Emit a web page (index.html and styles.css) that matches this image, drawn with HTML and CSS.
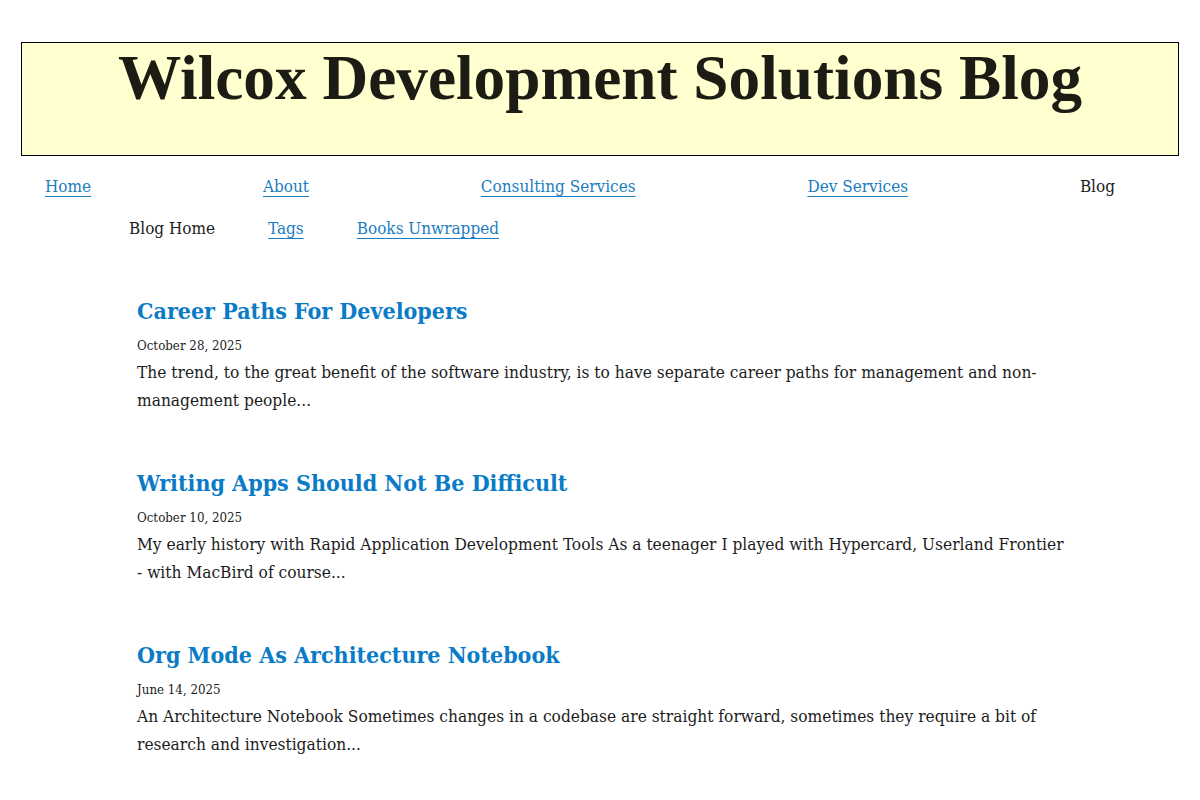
FILE: index.html
```
<!DOCTYPE html>
<html lang="en">
<head>
<meta charset="utf-8">
<title>Wilcox Development Solutions Blog</title>
<link rel="stylesheet" href="styles.css">
</head>
<body>
<header class="masthead">
  <h1 class="site-title">Wilcox Development Solutions Blog</h1>
</header>
<nav class="main-nav">
  <a href="#" class="nav-link">Home</a>
  <a href="#" class="nav-link">About</a>
  <a href="#" class="nav-link">Consulting Services</a>
  <a href="#" class="nav-link">Dev Services</a>
  <span class="nav-current">Blog</span>
</nav>
<nav class="sub-nav">
  <span class="nav-current">Blog Home</span>
  <a href="#" class="nav-link">Tags</a>
  <a href="#" class="nav-link">Books Unwrapped</a>
</nav>
<main class="posts">
  <article class="post">
    <h2 class="post-title"><a href="#">Career Paths For Developers</a></h2>
    <div class="post-date">October 28, 2025</div>
    <p class="post-excerpt">The trend, to the great benefit of the software industry, is to have separate career paths for management and non-management people...</p>
  </article>
  <article class="post">
    <h2 class="post-title"><a href="#">Writing Apps Should Not Be Difficult</a></h2>
    <div class="post-date">October 10, 2025</div>
    <p class="post-excerpt">My early history with Rapid Application Development Tools As a teenager I played with Hypercard, Userland Frontier - with MacBird of course...</p>
  </article>
  <article class="post">
    <h2 class="post-title"><a href="#">Org Mode As Architecture Notebook</a></h2>
    <div class="post-date">June 14, 2025</div>
    <p class="post-excerpt">An Architecture Notebook Sometimes changes in a codebase are straight forward, sometimes they require a bit of research and investigation...</p>
  </article>
</main>
</body>
</html>
```
FILE: styles.css
```
* { box-sizing: border-box; }
body {
  margin: 0;
  padding: 42px 21px 0;
  background: #fff;
  color: #1c1c1c;
  font-family: "DejaVu Serif Condensed", "DejaVu Serif", serif;
  font-stretch: condensed;
}
.masthead {
  height: 114px;
  border: 1px solid #000;
  background: #ffffd0;
  text-align: center;
}
.site-title {
  margin: 0;
  padding-top: 4px;
  font-family: "Liberation Serif", serif;
  font-stretch: normal;
  font-weight: bold;
  font-size: 63.3px;
  line-height: 1;
  color: #1c1c14;
}
.main-nav {
  display: flex;
  justify-content: space-between;
  padding: 0 64px 0 24px;
  margin-top: 19px;
  font-size: 17px;
  line-height: 22px;
}
.sub-nav {
  display: flex;
  gap: 53px;
  padding-left: 108px;
  margin-top: 20px;
  font-size: 17px;
  line-height: 22px;
}
.nav-link {
  color: #1a7dbf;
  text-decoration: underline;
  text-underline-offset: 4px;
}
.nav-current { color: #1c1c1c; }
.posts {
  padding: 56px 0 0 116px;
  width: 1046px;
}
.post { margin-bottom: 53px; }
.post-title {
  margin: 0;
  font-size: 23px;
  line-height: 32px;
  font-weight: bold;
}
.post-title a {
  color: #0a7bc6;
  text-decoration: none;
}
.post-date {
  margin-top: 11px;
  font-size: 13.2px;
  line-height: 16px;
}
.post-excerpt {
  margin: 4px 0 0;
  font-size: 17.2px;
  line-height: 28px;
}
```
